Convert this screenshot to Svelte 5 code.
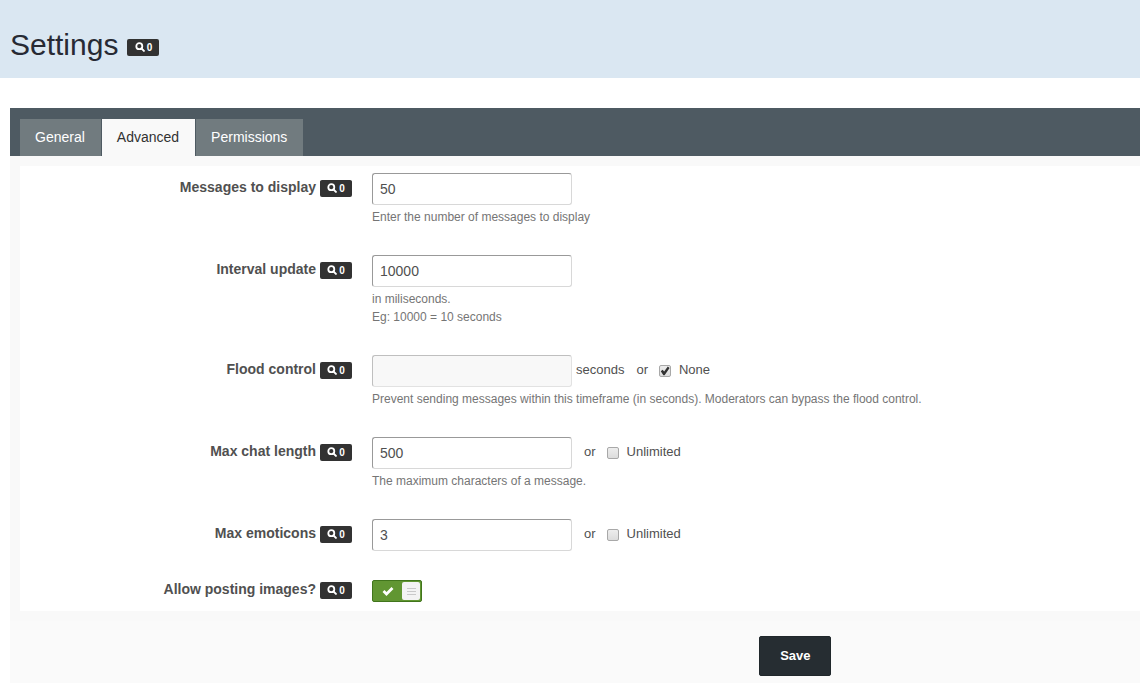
<script>
  let tabs = ['General', 'Advanced', 'Permissions'];
  let active = $state('Advanced');

  let messages = $state('50');
  let interval = $state('10000');
  let flood = $state('');
  let chatLength = $state('500');
  let emoticons = $state('3');

  let noFlood = $state(true);
  let unlimitedLength = $state(false);
  let unlimitedEmoticons = $state(false);
  let allowImages = $state(true);
</script>

{#snippet badge()}
  <span class="badge">
    <svg width="10" height="10" viewBox="0 0 10 10" aria-hidden="true">
      <circle cx="4.3" cy="4.2" r="3" fill="none" stroke="#fff" stroke-width="1.8" />
      <path d="M6.4 6.4 8.9 8.9" stroke="#fff" stroke-width="2" stroke-linecap="round" />
    </svg>
    <b>0</b>
  </span>
{/snippet}

<header>
  <h1>Settings</h1>
  {@render badge()}
</header>

<main>
  <nav>
    {#each tabs as tab}
      <button class="tab" class:active={tab === active} onclick={() => (active = tab)}>{tab}</button>
    {/each}
  </nav>

  <form onsubmit={(e) => e.preventDefault()}>
    <div class="panel">
      <div class="row">
        <div class="name"><label for="messages">Messages to display</label>{@render badge()}</div>
        <div class="field">
          <div class="line"><input class="text" id="messages" type="text" bind:value={messages} /></div>
          <p>Enter the number of messages to display</p>
        </div>
      </div>

      <div class="row">
        <div class="name"><label for="interval">Interval update</label>{@render badge()}</div>
        <div class="field">
          <div class="line"><input class="text" id="interval" type="text" bind:value={interval} /></div>
          <p>in miliseconds.<br />Eg: 10000 = 10 seconds</p>
        </div>
      </div>

      <div class="row">
        <div class="name"><label for="flood">Flood control</label>{@render badge()}</div>
        <div class="field">
          <div class="line">
            <input class="text" id="flood" type="text" bind:value={flood} disabled={noFlood} />
            <span class="unit">seconds</span>
            <span class="or">or</span>
            <label class="option"><input type="checkbox" bind:checked={noFlood} /><span>None</span></label>
          </div>
          <p>Prevent sending messages within this timeframe (in seconds). Moderators can bypass the flood control.</p>
        </div>
      </div>

      <div class="row">
        <div class="name"><label for="length">Max chat length</label>{@render badge()}</div>
        <div class="field">
          <div class="line">
            <input class="text" id="length" type="text" bind:value={chatLength} disabled={unlimitedLength} />
            <span class="or">or</span>
            <label class="option"><input type="checkbox" bind:checked={unlimitedLength} /><span>Unlimited</span></label>
          </div>
          <p>The maximum characters of a message.</p>
        </div>
      </div>

      <div class="row">
        <div class="name"><label for="emoticons">Max emoticons</label>{@render badge()}</div>
        <div class="field">
          <div class="line">
            <input class="text" id="emoticons" type="text" bind:value={emoticons} disabled={unlimitedEmoticons} />
            <span class="or">or</span>
            <label class="option"><input type="checkbox" bind:checked={unlimitedEmoticons} /><span>Unlimited</span></label>
          </div>
        </div>
      </div>

      <div class="row compact">
        <div class="name"><label for="images">Allow posting images?</label>{@render badge()}</div>
        <div class="field">
          <div class="toggle" class:off={!allowImages}>
            <input id="images" type="checkbox" bind:checked={allowImages} />
            <svg width="12" height="10" viewBox="0 0 12 10" aria-hidden="true">
              <path d="M1.5 5 4.5 8 10.5 2" fill="none" stroke="#fff" stroke-width="2.8" />
            </svg>
            <span class="knob"><i></i><i></i><i></i></span>
          </div>
        </div>
      </div>
    </div>

    <footer><button class="save" type="submit">Save</button></footer>
  </form>
</main>

<style>
  :global(body) {
    margin: 0;
    background: #fff;
  }
  header,
  main,
  button,
  input {
    font-family: 'Liberation Sans', Arial, sans-serif;
  }
  header {
    display: flex;
    align-items: center;
    gap: 9px;
    box-sizing: border-box;
    height: 78px;
    padding: 16px 10px 0;
    background: #dae7f2;
  }
  h1 {
    margin: 0;
    font-size: 30px;
    line-height: 36px;
    font-weight: normal;
    color: #272a34;
    padding-bottom: 4px;
  }
  .badge {
    display: inline-flex;
    flex: none;
    align-items: center;
    justify-content: center;
    gap: 2px;
    width: 32px;
    height: 17px;
    border-radius: 2px;
    background: #323232;
    color: #fff;
    font-size: 10px;
    line-height: 17px;
  }
  main {
    margin: 30px 0 0 10px;
    background: #fafafa;
    color: #505050;
    font-size: 13px;
  }
  nav {
    display: flex;
    gap: 1px;
    padding: 11px 10px 0;
    background: #4e5a62;
  }
  .tab {
    height: 37px;
    padding: 0 16px 2px 15px;
    border: 0;
    background: #717b7f;
    color: #fff;
    font-size: 14px;
  }
  .tab.active {
    background: #f9f9f9;
    color: #323232;
  }
  .panel {
    display: flex;
    flex-direction: column;
    gap: 29px;
    padding: 7px 0 9px;
    border: solid #f9f9f9;
    border-width: 10px 0 10px 10px;
    background: #fff;
  }
  .row {
    display: flex;
    align-items: flex-start;
    gap: 20px;
  }
  .name {
    display: flex;
    flex: none;
    align-items: center;
    justify-content: flex-end;
    gap: 4px;
    width: 332px;
    padding-top: 5px;
    font-size: 14px;
    line-height: 18px;
    font-weight: bold;
  }
  .name label {
    padding-bottom: 2px;
  }
  .compact .name {
    padding-top: 0;
  }
  .line {
    display: flex;
    align-items: center;
    line-height: 28px;
  }
  .line span {
    padding-bottom: 2px;
  }
  .text {
    box-sizing: border-box;
    width: 200px;
    height: 32px;
    padding: 0 7px;
    border: 1px solid;
    border-color: #999 #d8d8d8 #d8d8d8 #999;
    border-radius: 3px;
    background: #fff;
    color: #505050;
    font-size: 14px;
  }
  .text:disabled {
    border-color: #bfbfbf #e2e2e2 #e2e2e2 #bfbfbf;
    background: #f8f8f8;
  }
  .unit {
    margin-left: 4px;
  }
  .or {
    margin: 0 11px 0 12px;
  }
  .option {
    display: flex;
    align-items: center;
    gap: 8px;
  }
  .option input {
    display: grid;
    place-items: center;
    appearance: none;
    box-sizing: border-box;
    width: 12px;
    height: 12px;
    margin: 0;
    border: 1px solid #a8a8a8;
    border-radius: 2px;
    background: linear-gradient(#ededed, #dcdcdc);
  }
  .option input:checked::before {
    content: '';
    width: 10px;
    height: 10px;
    background: #333;
    clip-path: polygon(8% 52%, 26% 38%, 42% 56%, 78% 6%, 96% 20%, 46% 92%, 34% 92%);
  }
  p {
    margin: 3px 0 0;
    color: #757575;
    font-size: 12px;
    line-height: 18px;
  }
  .toggle {
    position: relative;
    display: flex;
    align-items: center;
    justify-content: space-between;
    box-sizing: border-box;
    width: 50px;
    height: 22px;
    padding: 0 1px 0 9px;
    border: 1px solid #41751c;
    border-radius: 2px;
    background: #619632;
  }
  .toggle.off {
    flex-direction: row-reverse;
    padding: 0 9px 0 1px;
    border-color: #999;
    background: #aaa;
  }
  .toggle input {
    position: absolute;
    inset: 0;
    width: 100%;
    height: 100%;
    margin: 0;
    opacity: 0;
  }
  .knob {
    display: flex;
    flex-direction: column;
    align-items: center;
    justify-content: center;
    gap: 2px;
    width: 18px;
    height: 18px;
    border-radius: 2px;
    background: #f3f3f3;
  }
  .knob i {
    width: 9px;
    height: 1px;
    background: #c9c9c9;
  }
  footer {
    padding: 15px 0 7px 39%;
    text-align: center;
  }
  .save {
    width: 72px;
    height: 40px;
    padding: 0 0 2px;
    border: 1px solid #20272b;
    border-radius: 2px;
    background: #262d32;
    color: #fff;
    font-size: 13px;
    font-weight: bold;
  }
</style>
